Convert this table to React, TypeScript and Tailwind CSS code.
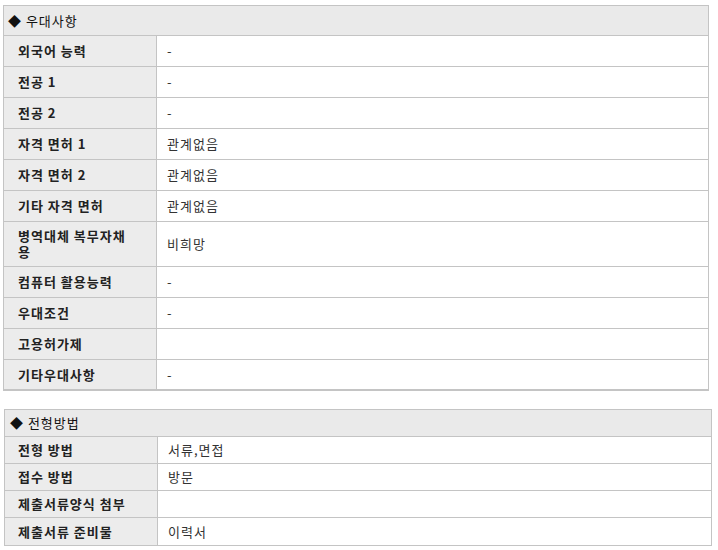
const font = { fontFamily: '"Noto Sans CJK KR", "Noto Sans", sans-serif' };

type Row = { label: string; value: string; tall?: boolean };

const benefits: Row[] = [
  { label: "외국어 능력", value: "-" },
  { label: "전공 1", value: "-" },
  { label: "전공 2", value: "-" },
  { label: "자격 면허 1", value: "관계없음" },
  { label: "자격 면허 2", value: "관계없음" },
  { label: "기타 자격 면허", value: "관계없음" },
  { label: "병역대체 복무자채\n용", value: "비희망", tall: true },
  { label: "컴퓨터 활용능력", value: "-" },
  { label: "우대조건", value: "-" },
  { label: "고용허가제", value: "" },
  { label: "기타우대사항", value: "-" },
];

const selection: Row[] = [
  { label: "전형 방법", value: "서류,면접" },
  { label: "접수 방법", value: "방문" },
  { label: "제출서류양식 첨부", value: "" },
  { label: "제출서류 준비물", value: "이력서" },
];

export default function App() {
  return (
    <div className="min-h-screen bg-white text-[13px] text-[#222] tracking-[1px]" style={font}>
      <div className="pt-[5px] pl-[3px] w-[709px]">
        <div className="border border-[#c4c4c4] border-b-2">
          <div className="h-[30px] flex items-center pl-[4px] bg-[#eaeaea] border-b border-[#c4c4c4] text-[#111]">
            ◆ 우대사항
          </div>
          {benefits.map((r, i) => (
            <div
              key={r.label}
              className={
                "flex " +
                (i < benefits.length - 1 ? "border-b border-[#c4c4c4] " : "") +
                (r.tall ? "h-[45px]" : i < benefits.length - 1 ? "h-[31px]" : "h-[29px]")
              }
            >
              <div className="w-[153px] shrink-0 bg-[#ececec] border-r border-[#c4c4c4] pl-[14px] pr-[8px] flex items-center font-bold leading-[16px] whitespace-pre-line">
                {r.label}
              </div>
              <div className="flex-1 flex items-center pl-[10px] text-[#333]">{r.value}</div>
            </div>
          ))}
        </div>
      </div>

      <div className="mt-[18px] pl-[4px] w-[712px]">
        <div className="border border-[#c4c4c4]">
          <div className="h-[27px] flex items-center pl-[5px] bg-[#eaeaea] border-b border-[#c4c4c4] text-[#111]">
            ◆ 전형방법
          </div>
          {selection.map((r, i) => (
            <div
              key={r.label}
              className={
                "flex " + (i < selection.length - 1 ? "h-[27px] border-b border-[#c4c4c4]" : "h-[27px]")
              }
            >
              <div className="w-[153px] shrink-0 bg-[#ececec] border-r border-[#c4c4c4] pl-[13px] flex items-center font-bold">
                {r.label}
              </div>
              <div className="flex-1 flex items-center pl-[10px] text-[#333]">{r.value}</div>
            </div>
          ))}
        </div>
      </div>
    </div>
  );
}
